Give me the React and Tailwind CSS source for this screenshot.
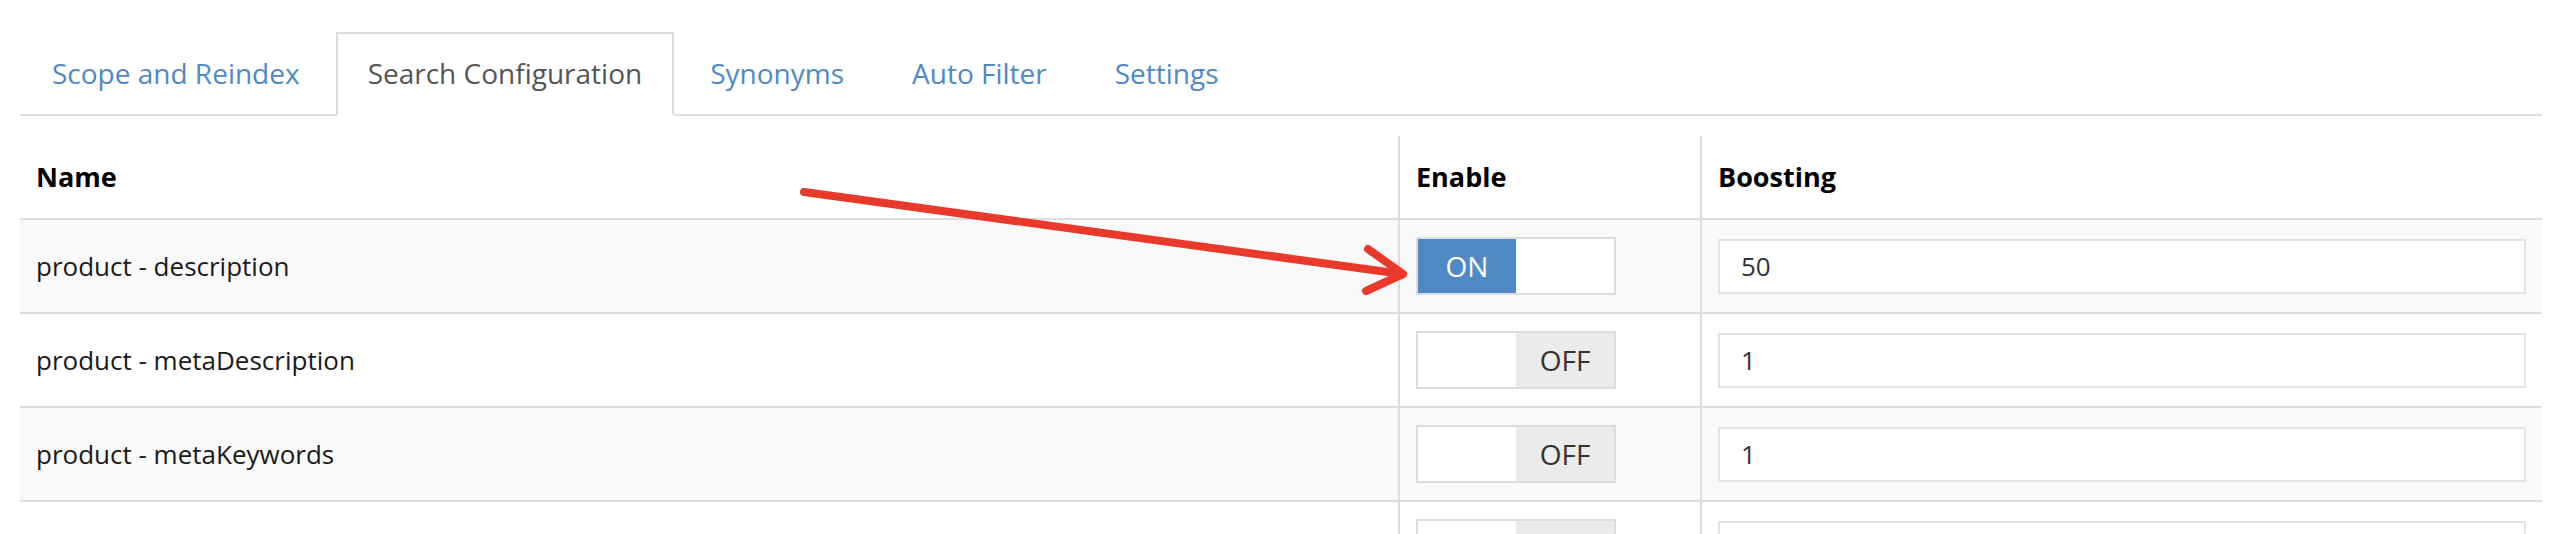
import React from "react";

const tabs = [
  { label: "Scope and Reindex", active: false },
  { label: "Search Configuration", active: true },
  { label: "Synonyms", active: false },
  { label: "Auto Filter", active: false },
  { label: "Settings", active: false },
];

const rows = [
  { name: "product - description", on: true, boost: "50" },
  { name: "product - metaDescription", on: false, boost: "1" },
  { name: "product - metaKeywords", on: false, boost: "1" },
  { name: "", on: false, boost: "", hidden: true },
];

function Toggle({ on, hidden }) {
  return (
    <div className="flex w-[200px] h-[58px] border-2 border-[#dddddd] bg-white">
      {on ? (
        <>
          <div className="w-[98px] h-full bg-[#4f89c6] text-white flex items-center justify-center text-[28px] leading-[40px]">
            ON
          </div>
          <div className="w-[98px] h-full bg-white" />
        </>
      ) : (
        <>
          <div className="w-[98px] h-full bg-white" />
          <div className="w-[98px] h-full bg-[#ebebeb] text-[#333333] flex items-center justify-center text-[28px] leading-[40px]">
            {hidden ? "" : "OFF"}
          </div>
        </>
      )}
    </div>
  );
}

export default function App() {
  return (
    <div className="relative w-[2552px] h-[534px] overflow-hidden bg-white pl-[20px] pr-[10px] pt-[32px] font-['Open_Sans','Noto_Sans',sans-serif]">
      <div className="flex border-b-2 border-[#dddddd]">
        {tabs.map((t) =>
          t.active ? (
            <div
              key={t.label}
              className="-mb-[2px] mr-[4px] border-2 border-[#dddddd] border-b-transparent bg-white px-[30px] pt-[19px] pb-[21px] text-[28px] leading-[40px] text-[#555555]"
            >
              {t.label}
            </div>
          ) : (
            <div
              key={t.label}
              className="-mb-[2px] mr-[4px] border-2 border-transparent px-[30px] pt-[19px] pb-[21px] text-[28px] leading-[40px] text-[#4f89c6]"
            >
              {t.label}
            </div>
          )
        )}
      </div>

      <div className="mt-[20px] grid grid-cols-[1378px_302px_842px]">
        <div className="h-[84px] border-b-2 border-[#dddddd] flex items-center px-[16px] text-[27px] leading-[40px] font-bold text-black">
          Name
        </div>
        <div className="h-[84px] border-b-2 border-l-2 border-[#dddddd] flex items-center px-[16px] text-[27px] leading-[40px] font-bold text-black">
          Enable
        </div>
        <div className="h-[84px] border-b-2 border-l-2 border-[#dddddd] flex items-center px-[16px] text-[27px] leading-[40px] font-bold text-black">
          Boosting
        </div>

        {rows.map((r, i) => {
          const bg = i % 2 === 0 ? "bg-[#f9f9f9]" : "bg-white";
          return (
            <React.Fragment key={i}>
              <div className={`h-[94px] border-b-2 border-[#dddddd] flex items-center px-[16px] text-[26px] leading-[40px] text-[#1a1a1a] ${bg}`}>
                {r.name}
              </div>
              <div className={`h-[94px] border-b-2 border-l-2 border-[#dddddd] flex items-center px-[16px] ${bg}`}>
                <Toggle on={r.on} hidden={r.hidden} />
              </div>
              <div className={`h-[94px] border-b-2 border-l-2 border-[#dddddd] flex items-center px-[16px] ${bg}`}>
                <div className="w-full h-[55px] border-2 border-[#e3e3e3] bg-white flex items-center pl-[21px] text-[26px] leading-[40px] text-[#333333]">
                  {r.boost}
                </div>
              </div>
            </React.Fragment>
          );
        })}
      </div>

      <svg
        className="absolute left-0 top-0 pointer-events-none"
        width="2552"
        height="534"
        viewBox="0 0 2552 534"
      >
        <g stroke="#e8392b" strokeWidth="8" strokeLinecap="round" strokeLinejoin="round" fill="none">
          <line x1="804" y1="192" x2="1402" y2="274" />
          <polyline points="1368,249 1403,274 1366,291" />
        </g>
      </svg>
    </div>
  );
}
